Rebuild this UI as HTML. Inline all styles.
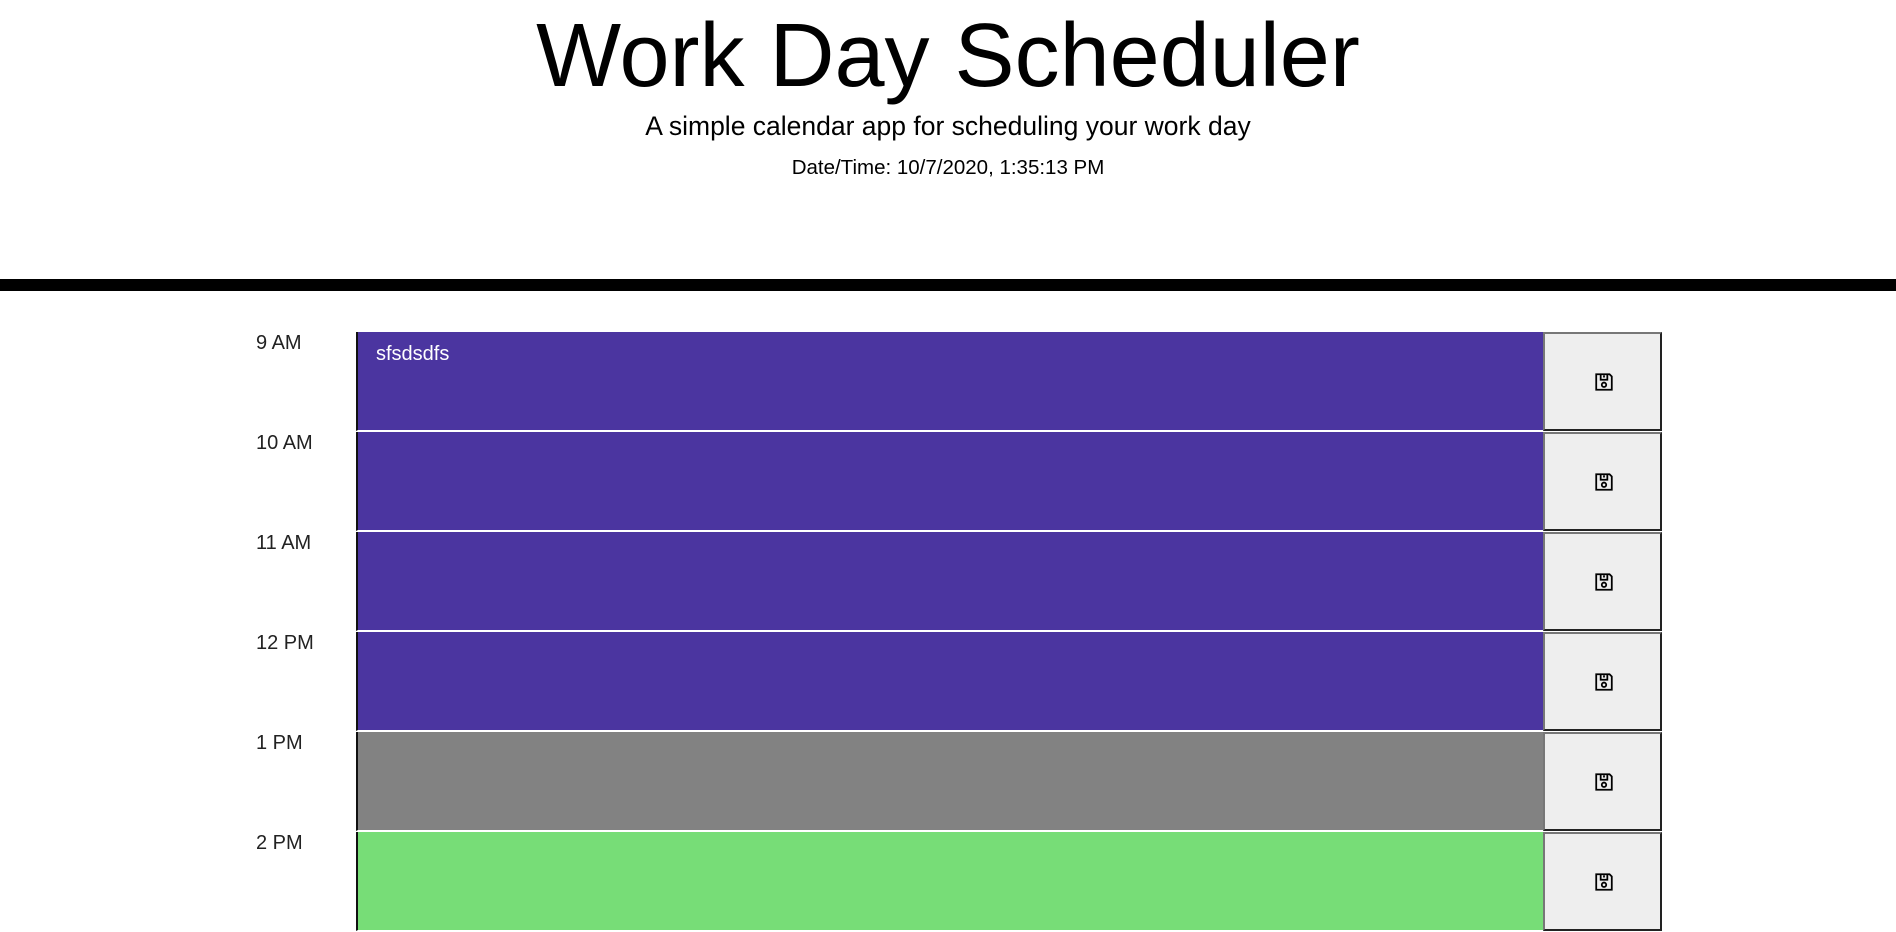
<!DOCTYPE html>
<html><head><style>
body{margin:0;width:1896px;height:895px;overflow:hidden;background:#fff;font-family:"Liberation Sans",sans-serif;color:#000}
h1{position:absolute;top:2px;left:0;width:1896px;text-align:center;margin:0;font-weight:normal;font-size:90px;line-height:108px}
.sub{position:absolute;top:111px;width:1896px;text-align:center;font-size:26.5px}
.dt{position:absolute;top:156px;width:1896px;text-align:center;font-size:20.5px}
.bar{position:absolute;top:279px;left:0;width:1896px;height:12px;background:#000}
.row{position:absolute;left:0;width:1896px;height:100px}
.lbl{position:absolute;left:256px;top:0px;font-size:20px;color:#222}
.ta{position:absolute;left:356px;top:0;width:1187px;height:99px;border-left:2px solid #111;border-bottom:1px solid #fff;box-sizing:border-box;color:#fff;font-size:20px;padding:11px 18px}
.btn{position:absolute;left:1543px;top:0;width:119px;height:99px;background:#eee;border:2px solid;border-color:#777 #222 #222 #777;box-sizing:border-box}
.btn svg{position:absolute;left:49px;top:38px}
</style></head><body>
<h1>Work Day Scheduler</h1>
<div class="sub">A simple calendar app for scheduling your work day</div>
<div class="dt">Date/Time: 10/7/2020, 1:35:13 PM</div>
<div class="bar"></div>
<div class="row" style="top:332px"><div class="lbl">9 AM</div><div class="ta" style="background:#4b35a0">sfsdsdfs</div><div class="btn"><svg width="20" height="20" viewBox="0 0 18 18"><path d="M2 2h12l2 2v12H2z M6 2v5h6V2 M9 3v2" fill="none" stroke="#000" stroke-width="1.6"/><circle cx="9" cy="11.5" r="2" fill="none" stroke="#000" stroke-width="1.6"/></svg></div></div>
<div class="row" style="top:432px"><div class="lbl">10 AM</div><div class="ta" style="background:#4b35a0"></div><div class="btn"><svg width="20" height="20" viewBox="0 0 18 18"><path d="M2 2h12l2 2v12H2z M6 2v5h6V2 M9 3v2" fill="none" stroke="#000" stroke-width="1.6"/><circle cx="9" cy="11.5" r="2" fill="none" stroke="#000" stroke-width="1.6"/></svg></div></div>
<div class="row" style="top:532px"><div class="lbl">11 AM</div><div class="ta" style="background:#4b35a0"></div><div class="btn"><svg width="20" height="20" viewBox="0 0 18 18"><path d="M2 2h12l2 2v12H2z M6 2v5h6V2 M9 3v2" fill="none" stroke="#000" stroke-width="1.6"/><circle cx="9" cy="11.5" r="2" fill="none" stroke="#000" stroke-width="1.6"/></svg></div></div>
<div class="row" style="top:632px"><div class="lbl">12 PM</div><div class="ta" style="background:#4b35a0"></div><div class="btn"><svg width="20" height="20" viewBox="0 0 18 18"><path d="M2 2h12l2 2v12H2z M6 2v5h6V2 M9 3v2" fill="none" stroke="#000" stroke-width="1.6"/><circle cx="9" cy="11.5" r="2" fill="none" stroke="#000" stroke-width="1.6"/></svg></div></div>
<div class="row" style="top:732px"><div class="lbl">1 PM</div><div class="ta" style="background:#828282"></div><div class="btn"><svg width="20" height="20" viewBox="0 0 18 18"><path d="M2 2h12l2 2v12H2z M6 2v5h6V2 M9 3v2" fill="none" stroke="#000" stroke-width="1.6"/><circle cx="9" cy="11.5" r="2" fill="none" stroke="#000" stroke-width="1.6"/></svg></div></div>
<div class="row" style="top:832px"><div class="lbl">2 PM</div><div class="ta" style="background:#77dd77"></div><div class="btn"><svg width="20" height="20" viewBox="0 0 18 18"><path d="M2 2h12l2 2v12H2z M6 2v5h6V2 M9 3v2" fill="none" stroke="#000" stroke-width="1.6"/><circle cx="9" cy="11.5" r="2" fill="none" stroke="#000" stroke-width="1.6"/></svg></div></div>
</body></html>
